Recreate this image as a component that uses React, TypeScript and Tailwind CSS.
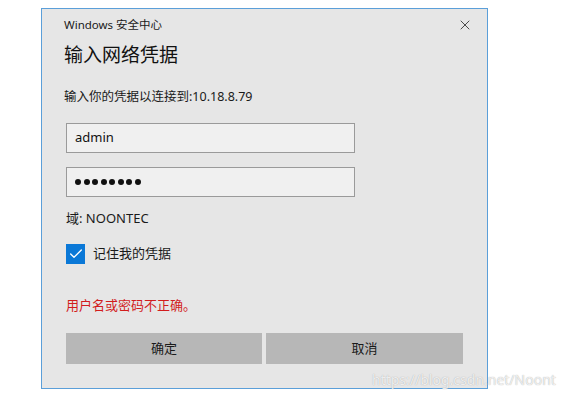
import { X, Check } from "lucide-react";

const FONT = "font-['Noto_Sans','Noto_Sans_CJK_SC',sans-serif]";

export default function App() {
  return (
    <div className={`relative h-[397px] w-[570px] overflow-hidden bg-white pl-[41px] pt-[8px] ${FONT}`}>
      <div className="flex h-[381px] w-[447px] flex-col border border-[#5b9fd9] bg-[#e6e6e6] pl-[24px] pr-[24px]">
        {/* title bar */}
        <div className="flex h-[32px] items-center justify-between">
          <span className="-ml-[2px] text-[11.5px] text-[#1a1a1a]">Windows 安全中心</span>
          <X className="-mr-[10px] h-[16px] w-[16px] text-[#222]" strokeWidth={1.2} />
        </div>

        <h1 className="-ml-[2px] mt-[1px] text-[19px] leading-[26px] text-[#111]">输入网络凭据</h1>

        <p className="-ml-[2px] mt-[20px] text-[12.5px] leading-[18px] text-[#1a1a1a]">
          输入你的凭据以连接到:10.18.8.79
        </p>

        <div className="mt-[17px] flex h-[30px] w-[289px] items-center border border-[#9a9a9a] bg-[#f0f0f0] px-[8px] text-[13px] text-[#111]">
          admin
        </div>
        <div className="mt-[14px] flex h-[30px] w-[289px] items-center gap-[2.5px] border border-[#9a9a9a] bg-[#f0f0f0] px-[8px]">
          {Array.from({ length: 8 }).map((_, i) => (
            <span key={i} className="h-[6px] w-[6px] rounded-full bg-[#111]" />
          ))}
        </div>

        <p className="mt-[12px] text-[13px] leading-[18px] text-[#1a1a1a]">域: NOONTEC</p>

        <label className="mt-[17px] flex items-center gap-[8px]">
          <span className="grid h-[20px] w-[19px] place-items-center bg-[#0a78d7]">
            <Check className="h-[16px] w-[16px] text-white" strokeWidth={2} />
          </span>
          <span className="text-[13px] text-[#1a1a1a]">记住我的凭据</span>
        </label>

        <p className="mt-[32px] text-[13px] leading-[18px] text-[#d21c1c]">用户名或密码不正确。</p>

        <div className="mt-[19px] flex gap-[4px]">
          <button className="h-[31px] w-[196px] bg-[#b7b7b7] text-[13px] text-[#1a1a1a]">确定</button>
          <button className="h-[31px] w-[197px] bg-[#b7b7b7] text-[13px] text-[#1a1a1a]">取消</button>
        </div>
      </div>

      {/* csdn watermark */}
      <span className="absolute left-[372px] top-[369px] text-[14px] text-white/80 [text-shadow:0_0_1px_#9a9a9a]">
        https://blog.csdn.net/Noont
      </span>
    </div>
  );
}
